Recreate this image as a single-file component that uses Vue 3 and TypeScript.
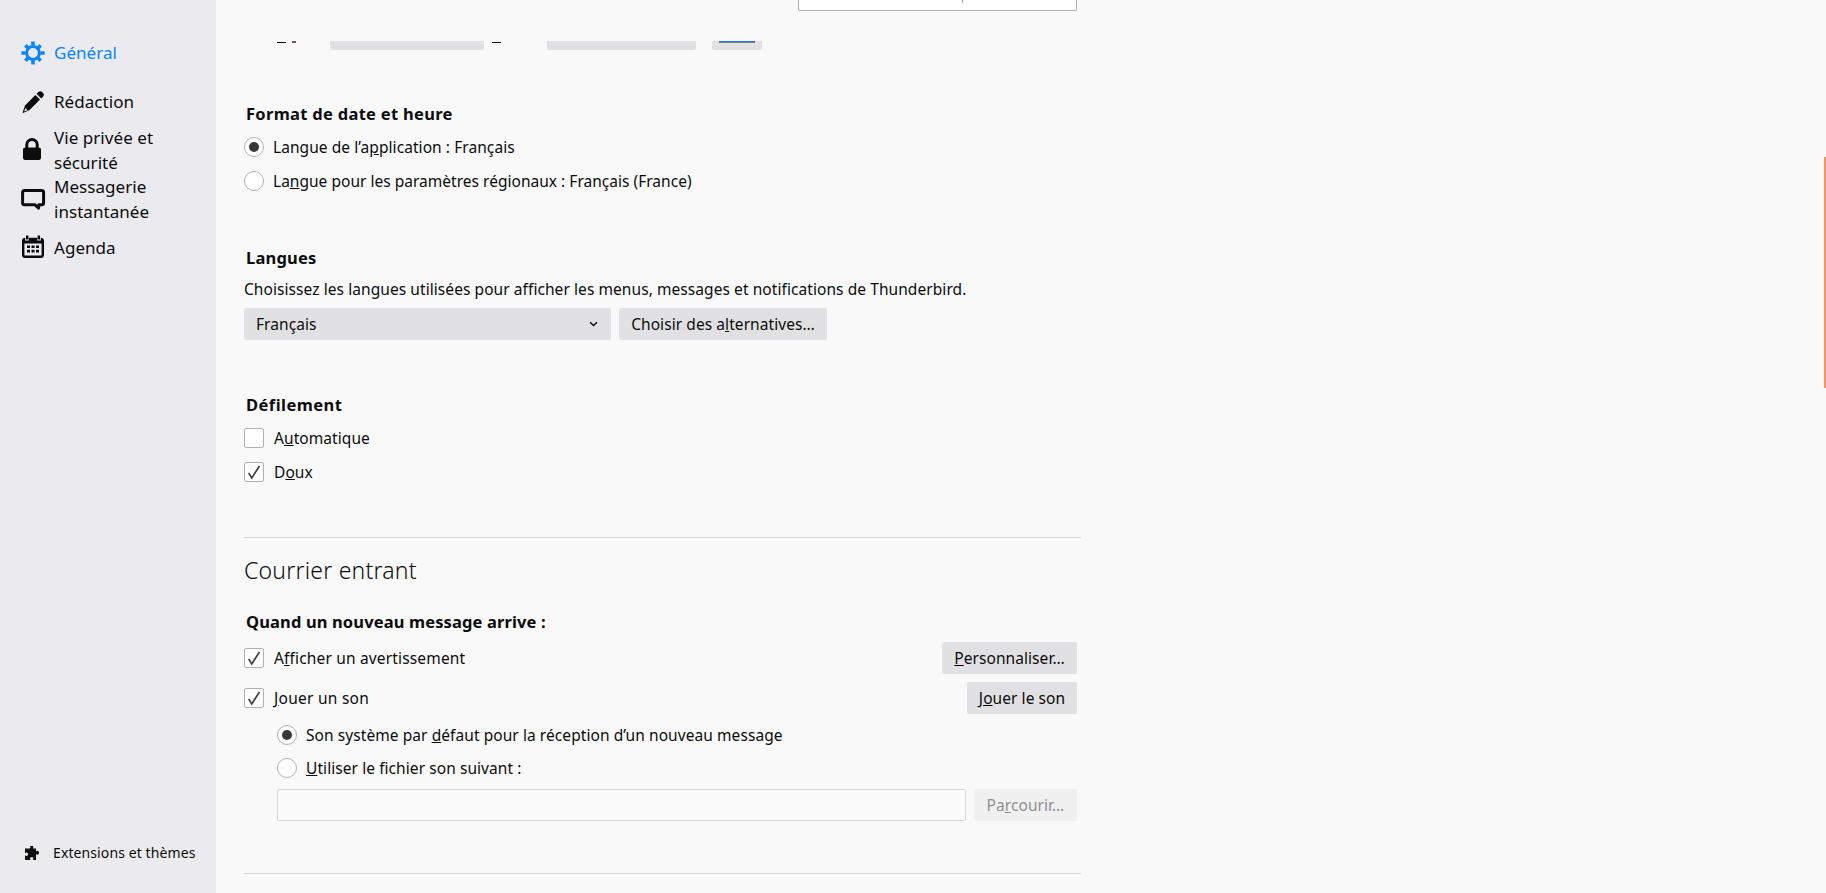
<script setup lang="ts">
interface NavItem {
  id: string;
  lines: string[];
  active?: boolean;
}
const navItems: NavItem[] = [
  { id: "gear", lines: ["Général"], active: true },
  { id: "pen", lines: ["Rédaction"] },
  { id: "lock", lines: ["Vie privée et", "sécurité"] },
  { id: "chat", lines: ["Messagerie", "instantanée"] },
  { id: "cal", lines: ["Agenda"] },
];
</script>

<template>
  <div class="app">
    <aside class="sidebar">
      <nav class="nav">
        <a v-for="item in navItems" :key="item.id" class="nav-item" :class="{ active: item.active }">
          <svg class="nav-icon" viewBox="0 0 24 24" aria-hidden="true">
            <g v-if="item.id === 'gear'">
              <path fill="none" stroke="currentColor" stroke-width="3" d="M12 5.6a6.4 6.4 0 1 0 0 12.8a6.4 6.4 0 1 0 0-12.8z" />
              <path fill="currentColor" d="M10.2 0.4h3.6v4h-3.6zM10.2 19.6h3.6v4h-3.6zM0.4 10.2h4v3.6h-4zM19.6 10.2h4v3.6h-4zM3.1 5.6l2.5-2.5 2.9 2.9-2.5 2.5zM15.5 18l2.5-2.5 2.9 2.9-2.5 2.5zM18.4 3.1l2.5 2.5-2.9 2.9-2.5-2.5zM6 15.5l2.5 2.5-2.9 2.9-2.5-2.5z" />
            </g>
            <g v-else-if="item.id === 'pen'">
              <path fill="currentColor" d="M17.6 1.8c.9-.9 2.3-.9 3.2 0l1.4 1.4c.9.9.9 2.3 0 3.2l-2 2-4.6-4.6zM14.4 5l4.6 4.6L8.6 20 2.2 23l-.6-.6L4 15.4z" />
              <path fill="#ebebef" d="M3.2 21.4l1.2-3.4 2.2 2.2z" />
            </g>
            <g v-else-if="item.id === 'lock'" transform="translate(-1 -2)">
              <path fill="none" stroke="currentColor" stroke-width="3" d="M6.8 11V7.8a5.2 5.2 0 0 1 10.4 0V11" />
              <rect x="3" y="10.4" width="18" height="12.6" rx="2.2" fill="currentColor" />
            </g>
            <g v-else-if="item.id === 'chat'">
              <path fill="none" stroke="currentColor" stroke-width="3" stroke-linejoin="round" d="M3.6 2.6h17c1.1 0 2 .9 2 2v10.2c0 1.100-.9 2-2 2h-2.800l-.2 3.400-3.600-3.400H3.600c-1.100 0-2-.9-2-2V4.600c0-1.100.9-2 2-2z" />
            </g>
            <g v-else transform="translate(0 -1)">
              <path fill="currentColor" d="M5 .6h2.400v4H5zM16.600.6H19v4h-2.400z" />
              <path fill="currentColor" fill-rule="evenodd" d="M4 2.800h.2v2.800h3.600V2.800h8.400v2.800h3.600V2.800h.2c1.700 0 3 1.300 3 3V20c0 1.700-1.300 3-3 3H4c-1.700 0-3-1.300-3-3V5.800c0-1.700 1.300-3 3-3zM3.400 8.400V20c0 .4.200.6.600.6h16c.4 0 .6-.2.600-.6V8.400z" />
              <path fill="currentColor" d="M6 10.400h3v2.600H6zM10.500 10.400h3v2.600h-3zM15 10.400h3v2.600h-3zM6 14.800h3v2.600H6zM10.500 14.800h3v2.600h-3zM15 14.800h3v2.600h-3z" />
            </g>
          </svg>
          <span class="nav-label">
            <span v-for="line in item.lines" :key="line" class="nav-line">{{ line }}</span>
          </span>
        </a>
      </nav>
      <a class="ext">
        <svg class="ext-icon" viewBox="0 0 14 14" aria-hidden="true">
          <path fill="currentColor" d="M5 0h3.200v2.400H6.400c-.1 0 0 0 0 0H11v3.200c.4-.7 1-.9 1.600-.9.800 0 1.400.9 1.400 2s-.6 2-1.400 2c-.6 0-1.200-.2-1.600-.9V14H7.600c.6-.4.800-1 .8-1.500 0-.8-.7-1.300-1.700-1.300s-1.700.5-1.700 1.300c0 .5.200 1.100.8 1.500H0V9.200c.4.600 1 .8 1.500.8.800 0 1.500-.7 1.500-1.700S2.300 6.600 1.500 6.600c-.5 0-1.100.2-1.500.8V2.400h4.800c.4-.2.700-.5.700-1 0-.5-.3-.9-.5-1.400z" />
        </svg>
        <span>Extensions et thèmes</span>
      </a>
    </aside>

    <main class="main">
      <div class="search-row">
        <div class="search"><i class="search-tick"></i></div>
      </div>

      <div class="clipped">
        <i class="dash first"></i>
        <i class="speck"></i>
        <b class="clip-btn one"></b>
        <i class="dash second"></i>
        <b class="clip-btn two"></b>
        <b class="clip-btn three"><i class="clip-blue"></i></b>
      </div>

      <h4 class="heading format">Format de date et heure</h4>
      <label class="opt">
        <span class="radio on"></span>
        <span>Langue de l’a<u>p</u>plication : Français</span>
      </label>
      <label class="opt">
        <span class="radio"></span>
        <span class="tight">La<u>n</u>gue pour les paramètres régionaux : Français (France)</span>
      </label>

      <h4 class="heading langues">Langues</h4>
      <p class="desc">Choisissez les langues utilisées pour afficher les menus, messages et notifications de Thunderbird.</p>
      <div class="lang-row">
        <div class="select">
          <span>Français</span>
          <svg class="chev" viewBox="0 0 10 6" aria-hidden="true">
            <path d="M1.200 1l3.800 3.600L8.800 1" fill="none" stroke="currentColor" stroke-width="1.600" />
          </svg>
        </div>
        <button class="btn choose">Choisir des a<u>l</u>ternatives…</button>
      </div>

      <h4 class="heading defil">Défilement</h4>
      <label class="opt check-opt first-check">
        <span class="check"></span>
        <span>A<u>u</u>tomatique</span>
      </label>
      <label class="opt check-opt">
        <span class="check">
          <svg viewBox="0 0 18 18" aria-hidden="true"><path d="M3.600 9.800l3.200 5.200L14.400 3" fill="none" stroke="#38383d" stroke-width="1.600" /></svg>
        </span>
        <span>D<u>o</u>ux</span>
      </label>

      <hr class="rule first-rule" />
      <h2 class="title">Courrier entrant</h2>
      <h4 class="heading quand">Quand un nouveau message arrive :</h4>

      <div class="action-row">
        <label class="inline-check">
          <span class="check">
            <svg viewBox="0 0 18 18" aria-hidden="true"><path d="M3.600 9.800l3.200 5.200L14.400 3" fill="none" stroke="#38383d" stroke-width="1.600" /></svg>
          </span>
          <span class="loose">A<u>f</u>ficher un avertissement</span>
        </label>
        <button class="btn personal"><u>P</u>ersonnaliser…</button>
      </div>
      <div class="action-row second">
        <label class="inline-check">
          <span class="check">
            <svg viewBox="0 0 18 18" aria-hidden="true"><path d="M3.600 9.800l3.200 5.200L14.400 3" fill="none" stroke="#38383d" stroke-width="1.600" /></svg>
          </span>
          <span class="looser"><u>J</u>ouer un son</span>
        </label>
        <button class="btn play">J<u>o</u>uer le son</button>
      </div>

      <div class="sub">
        <label class="opt sub-opt first-sub">
          <span class="radio on"></span>
          <span>Son système par <u>d</u>éfaut pour la réception d’un nouveau message</span>
        </label>
        <label class="opt sub-opt">
          <span class="radio"></span>
          <span><u>U</u>tiliser le fichier son suivant :</span>
        </label>
        <div class="file-row">
          <div class="file-input"></div>
          <button class="btn browse">Pa<u>r</u>courir…</button>
        </div>
      </div>

      <hr class="rule last-rule" />
    </main>

    <div class="scroll-mark"></div>
  </div>
</template>

<style>
html, body { margin: 0; background: #f9f9fa; overflow: hidden; }
</style>

<style scoped>
.app {
  display: flex;
  height: 893px;
  width: 1826px;
  overflow: hidden;
  position: relative;
  background: #f9f9fa;
  color: #0c0c0d;
  font-family: "Noto Sans", "Open Sans", sans-serif;
  font-size: 15.5px;
  letter-spacing: 0.07px;
}
.tight { letter-spacing: 0.02px; }
.loose { letter-spacing: 0.16px; }
.looser { letter-spacing: 0.26px; }
.sidebar {
  width: 216px;
  flex: none;
  background: #ebebef;
  display: flex;
  flex-direction: column;
  justify-content: space-between;
}
.nav { padding-top: 29px; display: flex; flex-direction: column; }
.nav-item {
  height: 48.75px;
  display: flex;
  align-items: center;
  padding-left: 21px;
  color: #0c0c0d;
}
.nav-item.active { color: #0a84ff; }
.nav-icon { width: 24px; height: 24px; flex: none; margin-right: 9px; overflow: visible; }
.nav-label {
  display: flex;
  flex-direction: column;
  font-size: 17px;
  line-height: 24.500px;
}
.nav-line { white-space: nowrap; letter-spacing: 0.05px; }
.ext {
  display: flex;
  align-items: center;
  padding: 0 0 28px 25px;
  font-size: 14px;
  letter-spacing: 0.1px;
  line-height: 24px;
}
.ext-icon { width: 14px; height: 14px; margin-right: 14px; }

.main {
  flex: none;
  width: 837px;
  margin-left: 28px;
  display: flex;
  flex-direction: column;
}
.search-row { display: flex; justify-content: flex-end; padding-right: 4px; height: 11px; }
.search {
  width: 277px;
  height: 10px;
  background: #fff;
  border: 1px solid #b1b1b3;
  border-top: none;
  border-bottom-width: 1.500px;
  border-radius: 0 0 2px 2px;
  position: relative;
}
.search-tick {
  position: absolute;
  left: 163px;
  top: 0;
  width: 1px;
  height: 3px;
  background: #8a9cc0;
}
.clipped {
  margin-top: 30px;
  height: 9px;
  position: relative;
  display: flex;
  overflow: hidden;
}
.dash { position: absolute; top: 1px; height: 1px; background: #0c0c0d; width: 9px; }
.dash.first { left: 33px; }
.dash.second { left: 248px; }
.speck { position: absolute; left: 48px; top: 0; width: 4px; height: 2px; background: #6a5a50; }
.clip-btn { position: absolute; top: 0; height: 9px; background: #e1e1e3; border-radius: 0 0 2px 2px; }
.clip-btn.one { left: 86px; width: 154px; }
.clip-btn.two { left: 303px; width: 149px; }
.clip-btn.three { left: 468px; width: 50px; }
.clip-blue {
  display: block;
  margin: 0 auto;
  width: 36px;
  height: 1px;
  background: #2a76d0;
  border-bottom: 1px solid #7a7f88;
}

.heading {
  margin: 0;
  height: 22px;
  line-height: 22px;
  font-size: 16.500px;
  font-weight: 700;
  padding-left: 2px;
  white-space: nowrap;
  letter-spacing: 0.2px;
}
.heading.format { margin-top: 53px; letter-spacing: 0.3px; }
.heading.langues { margin-top: 49px; }
.heading.defil { margin-top: 54px; letter-spacing: 0.45px; }
.heading.quand { margin-top: 26px; letter-spacing: 0.13px; }
.opt {
  display: flex;
  align-items: center;
  height: 34px;
  white-space: nowrap;
}
.heading.format + .opt { margin-top: 5px; }
.radio {
  width: 20px;
  height: 20px;
  box-sizing: border-box;
  border: 1px solid #b1b1b3;
  background: #fff;
  border-radius: 50%;
  margin-right: 9px;
  flex: none;
  position: relative;
}
.radio.on::after {
  content: "";
  position: absolute;
  left: 4px;
  top: 4px;
  width: 10px;
  height: 10px;
  border-radius: 50%;
  background: #38383d;
}
.check {
  width: 20px;
  height: 20px;
  box-sizing: border-box;
  border: 1px solid #b1b1b3;
  background: #fff;
  border-radius: 2px;
  margin-right: 10px;
  flex: none;
  display: block;
}
.check svg { display: block; width: 18px; height: 18px; }
.desc {
  margin: 9px 0 0;
  height: 22px;
  line-height: 22px;
  white-space: nowrap;
}
.lang-row { display: flex; gap: 8px; margin-top: 8px; }
.select {
  width: 367px;
  height: 32px;
  background: #e1e1e3;
  border-radius: 2px;
  display: flex;
  align-items: center;
  justify-content: space-between;
  padding: 0 13px 0 12px;
  box-sizing: border-box;
}
.chev { width: 9px; height: 6px; color: #0c0c0d; }
.btn {
  font: inherit;
  color: inherit;
  letter-spacing: inherit;
  border: none;
  background: #e1e1e3;
  border-radius: 2px;
  height: 32px;
  padding: 0;
  white-space: nowrap;
}
.btn.choose { width: 208px; }
.check-opt.first-check { margin-top: 5px; }
.rule {
  border: none;
  height: 1px;
  margin: 0;
  background: #d7d7db;
  flex: none;
}
.first-rule { margin-top: 48px; }
.title {
  margin: 17px 0 0;
  height: 30px;
  line-height: 30px;
  font-size: 23px;
  font-weight: 300;
  letter-spacing: 0.2px;
}
.action-row {
  display: flex;
  justify-content: space-between;
  align-items: center;
  margin-top: 9px;
  padding-right: 4px;
}
.action-row.second { margin-top: 8px; }
.inline-check { display: flex; align-items: center; }
.btn.personal { width: 135px; }
.btn.play { width: 110px; }
.sub { padding-left: 33px; padding-right: 4px; display: flex; flex-direction: column; }
.sub-opt { height: 33px; }
.first-sub { margin-top: 4px; }
.file-row { display: flex; gap: 8px; margin-top: 5px; }
.file-input {
  width: 689px;
  height: 32px;
  box-sizing: border-box;
  background: #fbfbfb;
  border: 1px solid #d7d7db;
  border-radius: 2px;
}
.btn.browse { width: 103px; background: #f0f0f1; color: #8f8f91; }
.last-rule { margin-top: 52px; }
.scroll-mark {
  position: absolute;
  right: 0;
  top: 157px;
  width: 2px;
  height: 231px;
  background: #ff8f66;
}
</style>
